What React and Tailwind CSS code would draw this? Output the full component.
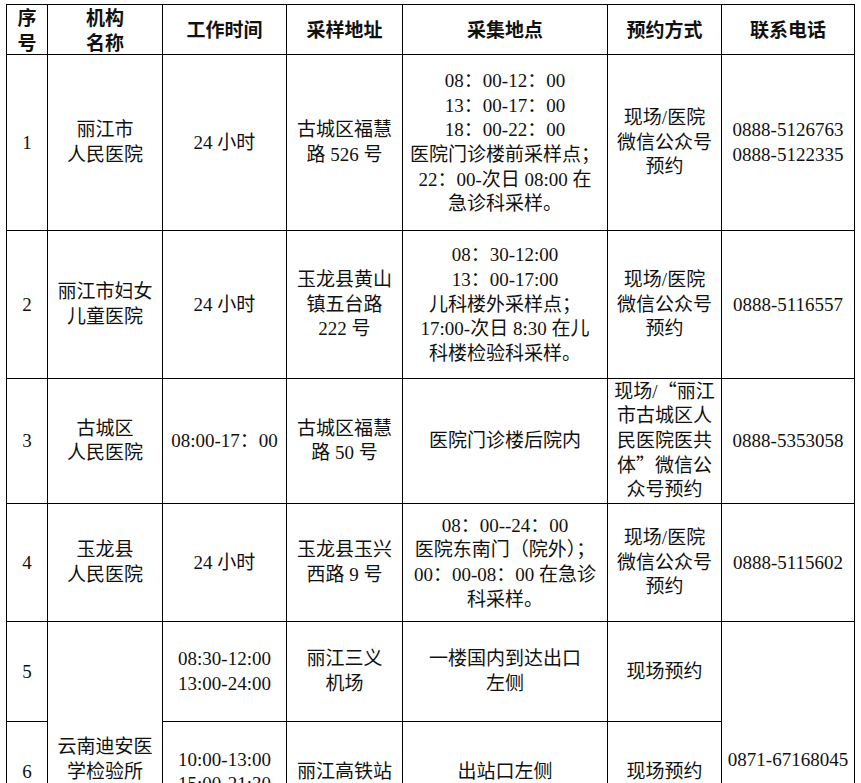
import React from 'react';

const body = "[font-family:'Liberation_Serif','Noto_Sans_CJK_SC',serif] text-[19px] leading-[24.7px] text-[#111]";
const cjk = "[font-family:'Noto_Sans_CJK_SC',sans-serif] leading-none";

const rows = [
    {
        h: 'h-[176px]',
        no: '1',
        org: ['丽江市', '人民医院'],
        time: ['24 小时'],
        addr: ['古城区福慧', '路 526 号'],
        place: ['08：00-12：00', '13：00-17：00', '18：00-22：00', '医院门诊楼前采样点；', '22：00-次日 08:00 在', '急诊科采样。'],
        way: ['现场/医院', '微信公众号', '预约'],
        tel: ['0888-5126763', '0888-5122335'],
    },
    {
        h: 'h-[148px]',
        no: '2',
        org: ['丽江市妇女', '儿童医院'],
        time: ['24 小时'],
        addr: ['玉龙县黄山', '镇五台路', '222 号'],
        place: ['08：30-12:00', '13：00-17:00', '儿科楼外采样点；', '17:00-次日 8:30 在儿', '科楼检验科采样。'],
        way: ['现场/医院', '微信公众号', '预约'],
        tel: ['0888-5116557'],
    },
    {
        h: 'h-[125px]',
        no: '3',
        org: ['古城区', '人民医院'],
        time: ['08:00-17：00'],
        addr: ['古城区福慧', '路 50 号'],
        place: ['医院门诊楼后院内'],
        way: [
            <>现场/<span className={cjk}>“</span>丽江</>,
            '市古城区人',
            '民医院医共',
            <>体<span className={cjk}>”</span>微信公</>,
            '众号预约',
        ],
        tel: ['0888-5353058'],
    },
    {
        h: 'h-[118px]',
        no: '4',
        org: ['玉龙县', '人民医院'],
        time: ['24 小时'],
        addr: ['玉龙县玉兴', '西路 9 号'],
        place: ['08：00--24：00', '医院东南门（院外）；', '00：00-08：00 在急诊', '科采样。'],
        way: ['现场/医院', '微信公众号', '预约'],
        tel: ['0888-5115602'],
    },
];

function Lines({ lines }) {
    return lines.map((l, i) => (
        <div key={i} className="whitespace-nowrap h-[24.7px]">{l}</div>
    ));
}

function Td({ lines, rowSpan }) {
    return (
        <td rowSpan={rowSpan} className="border border-black text-center align-middle px-[4px] py-0">
            <Lines lines={lines} />
        </td>
    );
}

function Th({ lines }) {
    return (
        <th className="border border-black text-center align-middle p-0 font-bold">
            <Lines lines={lines} />
        </th>
    );
}

export default function App() {
    return (
        <div className="bg-white min-h-[783px] pt-[4px] pl-[6px]">
            <table className={`border-collapse table-fixed w-[848px] ${body}`}>
                <colgroup>
                    <col className="w-[41px]" />
                    <col className="w-[115px]" />
                    <col className="w-[124px]" />
                    <col className="w-[116px]" />
                    <col className="w-[205px]" />
                    <col className="w-[114px]" />
                    <col className="w-[133px]" />
                </colgroup>
                <thead className="[font-family:'Noto_Sans_CJK_SC',sans-serif]">
                    <tr className="h-[49px]">
                        <Th lines={['序', '号']} />
                        <Th lines={['机构', '名称']} />
                        <Th lines={['工作时间']} />
                        <Th lines={['采样地址']} />
                        <Th lines={['采集地点']} />
                        <Th lines={['预约方式']} />
                        <Th lines={['联系电话']} />
                    </tr>
                </thead>
                <tbody>
                    {rows.map(r => (
                        <tr key={r.no} className={r.h}>
                            <Td lines={[r.no]} />
                            <Td lines={r.org} />
                            <Td lines={r.time} />
                            <Td lines={r.addr} />
                            <Td lines={r.place} />
                            <Td lines={r.way} />
                            <Td lines={r.tel} />
                        </tr>
                    ))}
                    {/* 云南迪安 spans the following rows */}
                    <tr className="h-[100px]">
                        <Td lines={['5']} />
                        <Td lines={['云南迪安医', '学检验所']} rowSpan={3} />
                        <Td lines={['08:30-12:00', '13:00-24:00']} />
                        <Td lines={['丽江三义', '机场']} />
                        <Td lines={['一楼国内到达出口', '左侧']} />
                        <Td lines={['现场预约']} />
                        <Td lines={['0871-67168045']} rowSpan={3} />
                    </tr>
                    <tr className="h-[101px]">
                        <Td lines={['6']} />
                        <Td lines={['10:00-13:00', '15:00-21:30']} />
                        <Td lines={['丽江高铁站']} />
                        <Td lines={['出站口左侧']} />
                        <Td lines={['现场预约']} />
                    </tr>
                    <tr className="h-[75px]">
                        <Td lines={['7']} />
                        <Td lines={['']} />
                        <Td lines={['']} />
                        <Td lines={['']} />
                        <Td lines={['']} />
                    </tr>
                </tbody>
            </table>
        </div>
    );
}
